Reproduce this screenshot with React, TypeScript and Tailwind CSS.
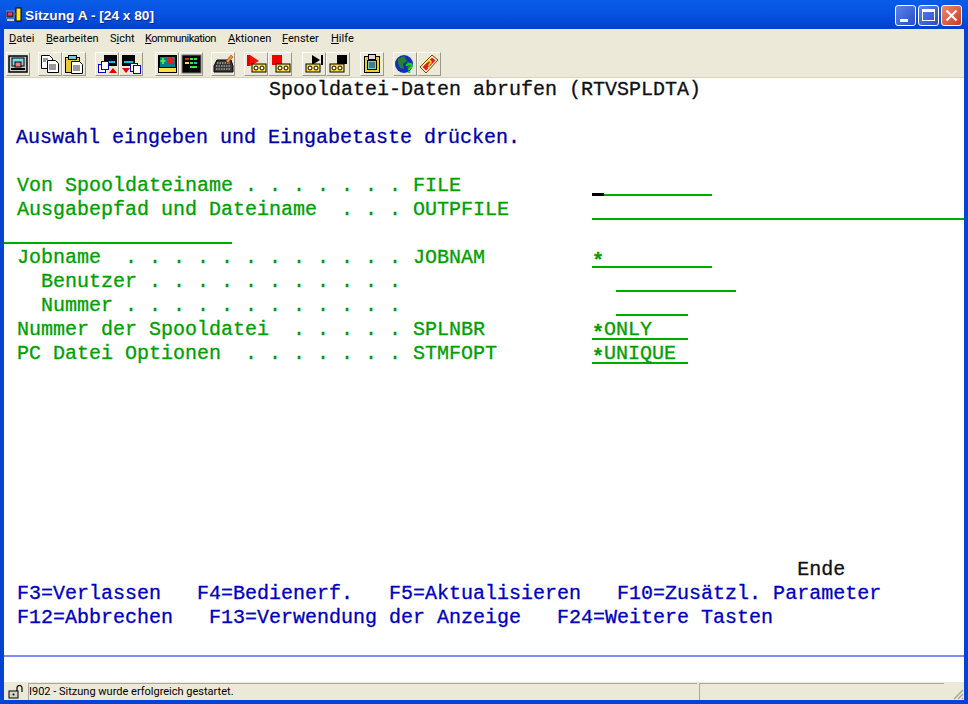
import React from 'react';
import { X } from 'lucide-react';

const menus: [string, string, string, string][] = [
  ['', 'D', 'atei', 'w-[37px]'],
  ['', 'B', 'earbeiten', 'w-[64px]'],
  ['S', 'i', 'cht', 'w-[35px]'],
  ['', 'K', 'ommunikation', 'w-[83px] tracking-[-0.5px]'],
  ['', 'A', 'ktionen', 'w-[54px]'],
  ['', 'F', 'enster', 'w-[49px]'],
  ['', 'H', 'ilfe', 'w-[30px]'],
];

function Tape({ x = 6, y = 11 }: { x?: number; y?: number }) {
  return (
    <g>
      <rect x={x} y={y} width="14" height="8" fill="#ffe040" stroke="#000" />
      <circle cx={x + 4} cy={y + 4} r="2" fill="#fff" stroke="#000" />
      <circle cx={x + 10} cy={y + 4} r="2" fill="#fff" stroke="#000" />
    </g>
  );
}

const icons: React.ReactNode[] = [
  <g key="0">
    <rect x="2" y="3" width="18" height="16" fill="#c8c8c8" stroke="#000" strokeWidth="1.5" />
    <rect x="5" y="5" width="12" height="8" fill="#70e0f0" stroke="#000" />
    <rect x="8" y="9" width="6" height="5" fill="#f08080" stroke="#000" />
    <rect x="4" y="15" width="14" height="2" fill="#000" />
  </g>,
  <g key="1" fill="#fff" stroke="#000">
    <path d="M2.500 2.500h8l3 3v10h-11z" />
    <path d="M8.500 7.500h8l3 3v9h-11z" />
    <path d="M4 6h5M4 8h3M10 12h7M10 14h7M10 16h7" strokeWidth="0.8" />
  </g>,
  <g key="2" stroke="#000">
    <rect x="2.500" y="4.500" width="14" height="15" fill="#e8c830" />
    <rect x="5.500" y="2.500" width="8" height="4" fill="#70c8d8" />
    <path d="M8.500 8.500h8l3 3v9h-11z" fill="#fff" />
    <path d="M10 13h7M10 15h7M10 17h7" strokeWidth="0.8" />
  </g>,
  <g key="3">
    <rect x="8" y="2" width="13" height="11" fill="#000" />
    <rect x="10" y="8" width="9" height="2" fill="#00c8d8" />
    <rect x="2.500" y="11.500" width="7" height="8" fill="#fff" stroke="#0000c0" />
    <rect x="5.500" y="8.500" width="7" height="8" fill="#fff" stroke="#0000c0" />
    <path d="M13 20h8l-4-5z" fill="#e80000" />
  </g>,
  <g key="4">
    <rect x="2" y="2" width="13" height="11" fill="#000" />
    <rect x="4" y="8" width="9" height="2" fill="#00c8d8" />
    <rect x="10.500" y="10.500" width="7" height="8" fill="#fff" stroke="#0000c0" />
    <rect x="13.500" y="12.500" width="7" height="8" fill="#fff" stroke="#0000c0" />
    <path d="M2 15h8l-4 5z" fill="#e80000" />
  </g>,
  <g key="5">
    <rect x="2" y="2" width="19" height="18" fill="#000" />
    <rect x="4" y="4" width="15" height="10" fill="#008090" />
    <path d="M7 5v6M4.500 8h5" stroke="#40f040" strokeWidth="2" />
    <rect x="11" y="5" width="6" height="6" fill="#e02020" />
    <rect x="3" y="15" width="17" height="4" fill="#ffe040" />
  </g>,
  <g key="6">
    <rect x="2" y="2" width="19" height="18" fill="#000" stroke="#777" />
    <rect x="5" y="5" width="4" height="2" fill="#e02020" />
    <rect x="10" y="5" width="3" height="2" fill="#40e040" />
    <rect x="14" y="5" width="3" height="2" fill="#40e040" />
    <rect x="5" y="9" width="4" height="2" fill="#ffe040" />
    <rect x="10" y="9" width="3" height="2" fill="#40e040" />
    <rect x="14" y="9" width="3" height="2" fill="#00c8d8" />
    <rect x="10" y="13" width="7" height="2" fill="#40e040" />
  </g>,
  <g key="7">
    <path d="M2 13l3-6h14l2 6v6H2z" fill="#383838" stroke="#000" />
    <path d="M5 10h13M4 13h15M4 16h15" stroke="#d0d0d0" strokeDasharray="1.500 1" />
    <path d="M14 8l5-6 2 2-5 6z" fill="#f09030" stroke="#803000" strokeWidth="0.5" />
  </g>,
  <g key="8">
    <path d="M5 2v11l9-5z" fill="#ff1000" />
    <rect x="2" y="2" width="3" height="11" fill="#e00000" />
    <Tape x={7} y={11} />
  </g>,
  <g key="9">
    <rect x="3" y="2" width="10" height="10" fill="#f00000" />
    <Tape x={7} y={11} />
  </g>,
  <g key="10">
    <path d="M9 2v10l8-5z" fill="#000" />
    <rect x="18" y="2" width="2" height="10" fill="#000" />
    <Tape x={3} y={11} />
  </g>,
  <g key="11">
    <rect x="10" y="2" width="10" height="9" fill="#000" />
    <Tape x={3} y={11} />
  </g>,
  <g key="12" stroke="#000">
    <rect x="3.500" y="3.500" width="15" height="16" fill="#e8d030" />
    <rect x="6.500" y="7.500" width="9" height="9" fill="#70d0d8" />
    <rect x="7.500" y="1.500" width="7" height="5" fill="#d8d8d8" />
    <path d="M8 10h6M8 12h6M8 14h6" strokeWidth="0.8" />
  </g>,
  <g key="13">
    <circle cx="10" cy="11" r="9" fill="#1030b8" />
    <path d="M4 6l6-3 3 5-4 3 1 5-4-1-2-5zM13 9l5 1 0 5-4 3z" fill="#2a8030" />
    <text x="11" y="20" fontFamily="Liberation Sans" fontWeight="700" fontSize="14" fill="#20d020">?</text>
  </g>,
  <g key="14">
    <path d="M2 14L14 2l6 5L8 20z" fill="#f8f0c0" stroke="#804000" />
    <path d="M4.500 14L14 4.500l3.500 3L8 17.500z" fill="#e02020" />
    <text x="8" y="15" fontFamily="Liberation Sans" fontWeight="700" fontSize="10" fill="#ffe040">?</text>
  </g>,
];

const groups: [number[], string][] = [
  [[0], 'ml-0'],
  [[1, 2], 'ml-[8px]'],
  [[3, 4], 'ml-[9px]'],
  [[5, 6], 'ml-[12px]'],
  [[7], 'ml-[8px]'],
  [[8, 9], 'ml-[9px]'],
  [[10, 11], 'ml-[10px]'],
  [[12], 'ml-[10px]'],
  [[13, 14], 'ml-[9px]'],
];

function Star() {
  return <span className="relative top-[4px] font-bold">*</span>;
}

function Field({ width, children }: { width: string; children?: React.ReactNode }) {
  return (
    <span className={`relative block h-[22px] border-b-2 border-[#00a800] leading-[24px] whitespace-pre ${width}`}>
      {children}
    </span>
  );
}

function Row({ label, className = 'text-[#00a000]', children }: { label?: string; className?: string; children?: React.ReactNode }) {
  return (
    <div className={`flex h-6 pl-[13px] leading-6 whitespace-pre ${className}`}>
      {label !== undefined && <span className="w-[575px] shrink-0">{label}</span>}
      {children}
    </div>
  );
}

export default function App() {
  return (
    <div className="flex h-[704px] w-[968px] flex-col overflow-hidden bg-[#0542d8] font-['Roboto',sans-serif]">
      {/* title bar */}
      <div className="flex h-[29px] shrink-0 items-center bg-gradient-to-b from-[#0a5ce8] via-[#0552e0] to-[#0440d0] pl-[6px] pr-[6px] pt-[4px]">
        <svg width="17" height="16" viewBox="0 0 17 16" className="mr-[2px] -mt-[3px]">
          <rect x="0" y="4" width="8" height="7" fill="#333" stroke="#ddd" strokeWidth="0.5" />
          <rect x="2" y="5.500" width="4" height="3" fill="#e04080" />
          <rect x="1" y="12" width="7" height="2" fill="#ccc" />
          <rect x="10" y="1" width="5" height="13" fill="#ffe820" stroke="#000" />
          <rect x="8" y="6" width="2" height="1.500" fill="#e02020" />
        </svg>
        <span className="font-['Liberation_Sans',sans-serif] text-[13.7px] font-bold text-white [text-shadow:1px_1px_0_#0a2a90]">Sitzung A - [24 x 80]</span>
        <div className="ml-auto -mt-[3px] flex gap-[2px]">
          <button className="flex h-[21px] w-[21px] items-end rounded-[3px] border border-white bg-gradient-to-br from-[#5c84e8] to-[#2a4cc8] pb-[3px] pl-[4px]">
            <span className="block h-[3px] w-[8px] bg-white" />
          </button>
          <button className="flex h-[21px] w-[21px] items-center justify-center rounded-[3px] border border-white bg-gradient-to-br from-[#5c84e8] to-[#2a4cc8]">
            <span className="block h-[12px] w-[13px] border border-t-[3px] border-white" />
          </button>
          <button className="flex h-[21px] w-[21px] items-center justify-center rounded-[3px] border border-white bg-gradient-to-br from-[#e88870] to-[#c83a18]">
            <X size={17} strokeWidth={3} strokeLinecap="square" className="text-white" />
          </button>
        </div>
      </div>

      <div className="mx-1 flex min-h-0 flex-1 flex-col bg-white">
        {/* menu bar */}
        <div className="flex h-[21px] shrink-0 items-center bg-[#ece9d8] pl-[5px] text-[11px] text-black">
          {menus.map(([pre, key, rest, w]) => (
            <span key={rest} className={w}>
              {pre}
              <span className="underline">{key}</span>
              {rest}
            </span>
          ))}
        </div>

        {/* toolbar */}
        <div className="flex h-[28px] shrink-0 items-start border-b border-[#d8d4c0] bg-[#ece9d8] pl-[2px] pt-[2px]">
          {groups.map(([g, ml]) => (
            <div key={g[0]} className={`flex ${ml}`}>
              {g.map((i) => (
                <div
                  key={i}
                  className="flex h-[24px] w-[24px] items-center justify-center border border-t-white border-l-white border-r-[#9a9888] border-b-[#9a9888] bg-[#ece9d8]"
                >
                  <svg width="22" height="22" viewBox="0 0 22 22">
                    {icons[i]}
                  </svg>
                </div>
              ))}
            </div>
          ))}
        </div>

        {/* terminal */}
        <div className="flex min-h-0 flex-1 flex-col font-['Liberation_Mono',monospace] text-[20px] text-[#00a000] [-webkit-text-stroke:0.3px]">
          <Row className="text-[#101010]">
            <span>{'                     Spooldatei-Daten abrufen (RTVSPLDTA)'}</span>
          </Row>
          <Row />
          <Row className="-ml-px text-[#0000a8]">
            <span>Auswahl eingeben und Eingabetaste drücken.</span>
          </Row>
          <Row />
          <Row label="Von Spooldateiname . . . . . . . FILE">
            <Field width="w-[120px]">
              <span className="absolute bottom-[-2px] left-0 h-[3px] w-3 bg-black" />
            </Field>
          </Row>
          <Row label="Ausgabepfad und Dateiname  . . . OUTPFILE">
            <Field width="w-[372px] -mr-[8px]" />
          </Row>
          <div className="h-6">
            <span className="block h-[22px] w-[228px] border-b-2 border-[#00a800]" />
          </div>
          <Row label="Jobname  . . . . . . . . . . . . JOBNAM">
            <Field width="w-[120px]"><Star /></Field>
          </Row>
          <Row label="  Benutzer . . . . . . . . . . .">
            <Field width="ml-6 w-[120px]" />
          </Row>
          <Row label="  Nummer . . . . . . . . . . . .">
            <Field width="ml-6 w-[72px]" />
          </Row>
          <Row label="Nummer der Spooldatei  . . . . . SPLNBR">
            <Field width="w-[96px]"><Star />ONLY</Field>
          </Row>
          <Row label="PC Datei Optionen  . . . . . . . STMFOPT">
            <Field width="w-[96px]"><Star />UNIQUE</Field>
          </Row>
          <div className="h-[192px] shrink-0" />
          <Row className="text-[#101010]">
            <span>{'                                                                 Ende'}</span>
          </Row>
          <Row className="text-[#0000c0]">
            <span>F3=Verlassen   F4=Bedienerf.   F5=Aktualisieren   F10=Zusätzl. Parameter</span>
          </Row>
          <Row className="text-[#0000c0]">
            <span>F12=Abbrechen   F13=Verwendung der Anzeige   F24=Weitere Tasten</span>
          </Row>
          <div className="mt-[25px] h-[2px] shrink-0 bg-[#7c8cf0]" />
        </div>

        {/* status bar */}
        <div className="flex h-[18px] shrink-0 bg-[#ece9d8] pt-px text-[11px] text-black">
          <div className="flex w-[24px] items-center justify-center">
            <svg width="18" height="14" viewBox="0 0 18 14">
              <rect x="2" y="6" width="9" height="7" fill="#d8d4c0" stroke="#000" />
              <circle cx="6.500" cy="9.500" r="1" fill="#000" />
              <path d="M10 6V3a2.500 2.500 0 0 1 5 0v4" fill="none" stroke="#000" strokeWidth="1.200" />
            </svg>
          </div>
          <div className="w-[669px] border-t border-l border-[#aca899] leading-[15px]">I902 - Sitzung wurde erfolgreich gestartet.</div>
          <div className="ml-[2px] w-[245px] border-t border-l border-[#aca899]" />
          <div className="flex flex-1 items-end justify-end">
            <svg width="12" height="12" viewBox="0 0 12 12">
              <path d="M11 2L2 11M11 6L6 11M11 10L10 11" stroke="#aca899" strokeWidth="1.500" />
            </svg>
          </div>
        </div>
      </div>
      <div className="h-1 shrink-0" />
    </div>
  );
}
